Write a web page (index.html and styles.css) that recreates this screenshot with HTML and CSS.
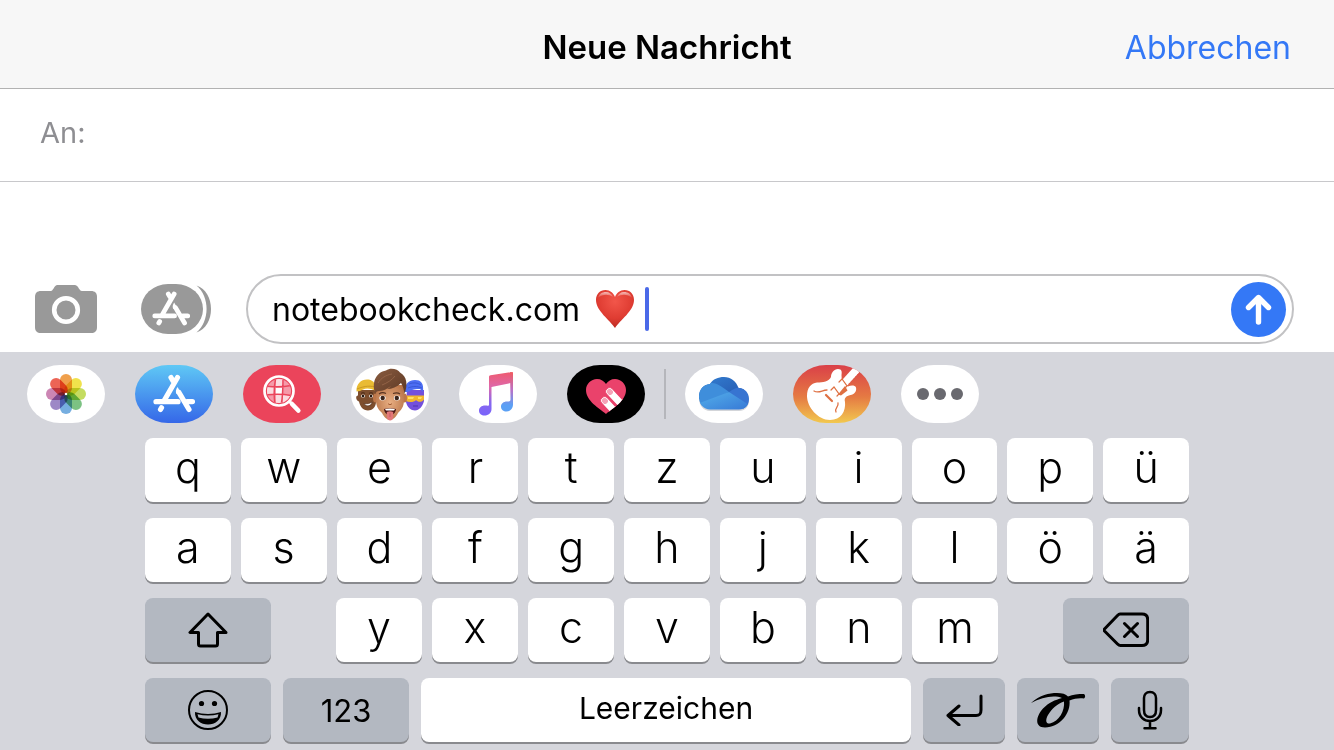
FILE: index.html
```html
<!DOCTYPE html>
<html lang="de">
<head>
  <meta charset="UTF-8">
  <meta name="viewport" content="width=device-width, initial-scale=1.0">
  <title>Neue Nachricht</title>
  <link rel="stylesheet" href="styles.css">
</head>
<body>
  <!-- Shared shapes -->
  <svg class="defs" aria-hidden="true">
    <symbol id="storeGlyph" viewBox="0 0 42 38">
      <g fill="none" stroke="currentColor" stroke-width="5.2" stroke-linecap="round" stroke-linejoin="round">
        <path d="M18 3l2 3.500M24.500 3L11.500 25.500M8.500 33.300l-1 1.700M3 27.200h22M34 27.200h5.500"/>
        <path d="M26 18L36 35"/>
      </g>
      <path fill="currentColor" d="M24.500 12.500c-2 3-2 5-1 7l4-2z"/>
    </symbol>
  </svg>

  <!-- Header -->
  <header class="navbar">
    <h1>Neue Nachricht</h1>
    <button class="cancel" type="button">Abbrechen</button>
  </header>

  <!-- Recipient -->
  <div class="recipient">
    <label for="to">An:</label>
    <input id="to" type="text">
  </div>

  <main class="messages"></main>

  <!-- Message Field -->
  <form class="composer">
    <button class="tool camera" type="button" aria-label="Kamera">
      <svg width="62" height="48" viewBox="0 0 62 48">
        <path fill="#999" d="M6 6h10c2 0 3-5 6-6h18c4 1 4 6 7 6h9c4 0 6 2 6 6v30c0 4-2 6-6 6H6c-4 0-6-2-6-6V12c0-4 2-6 6-6z"/>
        <circle cx="31" cy="25" r="11.8" fill="none" stroke="#fff" stroke-width="4.6"/>
      </svg>
    </button>
    <button class="tool apps" type="button" aria-label="Apps">
      <svg width="70" height="50" viewBox="0 0 70 50">
        <path fill="#999" d="M55.500 1.500C65 5 70 14 70 25s-5 20-14.500 23.500C69 37 69 13 55.500 1.500z"/>
        <rect width="62" height="50" rx="27" ry="25" fill="#999"/>
        <use href="#storeGlyph" x="11" y="7" width="38" height="35" color="#fff"/>
      </svg>
    </button>
    <div class="message-box">
      <input class="message" type="text" value="notebookcheck.com" aria-label="Nachricht">
      <svg class="heart" width="40" height="40" viewBox="0 0 40 40" role="img" aria-label="Herz">
        <defs>
          <radialGradient id="heartFill" cx=".5" cy=".3" r=".75">
            <stop offset="0" stop-color="#f2564a"/>
            <stop offset=".6" stop-color="#df3c32"/>
            <stop offset="1" stop-color="#b3271f"/>
          </radialGradient>
          <linearGradient id="heartShine" x2="0" y2="1">
            <stop offset="0" stop-color="#fff" stop-opacity=".65"/>
            <stop offset="1" stop-color="#fff" stop-opacity="0"/>
          </linearGradient>
        </defs>
        <path fill="url(#heartFill)" d="M20 39C15 31 1 22 1 11 1 5 5 1 10.500 1 15 1 18.500 4 20 8c1.500-4 5-7 9.500-7C35 1 39 5 39 11c0 11-14 20-19 28z"/>
        <path fill="url(#heartShine)" d="M3 9c1-4 4-6 8-6 3 0 6 2 7 5-5-3-10-3-15 1zM22 8c1-3 4-5 7-5 4 0 7 2 8 6-5-4-10-4-15-1z"/>
      </svg>
      <span class="caret"></span>
      <button class="send" type="submit" aria-label="Senden">
        <svg width="55" height="55" viewBox="0 0 55 55">
          <path d="M27.500 40V16M17.500 25.500l10-10 10 10" fill="none" stroke="#fff" stroke-width="5.400" stroke-linecap="round" stroke-linejoin="round"/>
        </svg>
      </button>
    </div>
  </form>

  <section class="keyboard">
    <!-- App Strip -->
    <nav class="app-strip">
      <button class="app" type="button" aria-label="Fotos">
        <svg viewBox="0 0 78 58">
          <g class="petals" transform="translate(39 29)">
            <rect x="-6" y="-20" width="12" height="20" rx="6" fill="#f0a04c"/>
            <rect x="-6" y="-20" width="12" height="20" rx="6" fill="#f0e24c" transform="rotate(45)"/>
            <rect x="-6" y="-20" width="12" height="20" rx="6" fill="#c4dc60" transform="rotate(90)"/>
            <rect x="-6" y="-20" width="12" height="20" rx="6" fill="#7cc283" transform="rotate(135)"/>
            <rect x="-6" y="-20" width="12" height="20" rx="6" fill="#76aee0" transform="rotate(180)"/>
            <rect x="-6" y="-20" width="12" height="20" rx="6" fill="#9d88c6" transform="rotate(225)"/>
            <rect x="-6" y="-20" width="12" height="20" rx="6" fill="#cc86b4" transform="rotate(270)"/>
            <rect x="-6" y="-20" width="12" height="20" rx="6" fill="#ec6455" transform="rotate(315)"/>
          </g>
          <circle cx="39" cy="29" r="1.300" fill="#fff"/>
        </svg>
      </button>
      <button class="app app-store" type="button" aria-label="App Store">
        <svg viewBox="0 0 78 58">
          <use href="#storeGlyph" x="18" y="9" width="42" height="39" color="#fff"/>
        </svg>
      </button>
      <button class="app app-images" type="button" aria-label="Bildersuche">
        <svg viewBox="0 0 78 58">
          <clipPath id="globeClip"><circle cx="36" cy="26" r="12"/></clipPath>
          <circle cx="36" cy="26" r="12" fill="#f59aa9"/>
          <g clip-path="url(#globeClip)">
            <path fill="#fbdbe0" d="M33 14h7v7h-7zM24 22h8v7h-8zM40 30h8v8h-8zM33 30h6v9h-6z"/>
            <path fill="#fff" d="M33 23h6v6h-6z"/>
            <path fill="none" stroke="#eb445b" stroke-width="1.500" d="M22 21c8 1 20 1 28-1M22 30c8-1 20-1 28 1M33 12c-2 8-2 20-1 28M40 12c0 8 0 20-2 28"/>
          </g>
          <circle cx="36" cy="26" r="14.500" fill="none" stroke="#fff" stroke-width="2.700"/>
          <path d="M46.500 36.500l3 3" stroke="#fff" stroke-width="3"/>
          <path d="M49 39l6.300 6.500" stroke="#fff" stroke-width="4.600" stroke-linecap="round"/>
        </svg>
      </button>
      <button class="app" type="button" aria-label="Memoji">
        <svg viewBox="0 0 78 58">
          <defs>
            <radialGradient id="skin" cx=".5" cy=".5" r=".6">
              <stop offset="0" stop-color="#e8ae82"/>
              <stop offset="1" stop-color="#b87448"/>
            </radialGradient>
            <linearGradient id="hair" x2="1" y2="1">
              <stop offset="0" stop-color="#8a5c40"/>
              <stop offset="1" stop-color="#5c3824"/>
            </linearGradient>
          </defs>
          <!-- left face -->
          <path fill="#7d4e2e" d="M7 25h18v12c0 5-4 8.500-8 8.500-5 0-8-4-9-9-3-1-4-6-1-6z"/>
          <path fill="#e9bb33" d="M5.500 26.500C5 19 10 14.500 16 14.500c4 0 7 2 8 5V26c-4-3-9-3-12-1.500-2 1-4 2-6.500 2z"/>
          <path fill="none" stroke="#c3921f" stroke-width=".8" d="M6 24c5-2 11-4 18-2"/>
          <ellipse cx="12" cy="31" rx="2" ry="1.500" fill="#fff"/><circle cx="12" cy="31" r="1.300" fill="#241812"/>
          <ellipse cx="20" cy="31" rx="2" ry="1.500" fill="#fff"/><circle cx="20" cy="31" r="1.300" fill="#241812"/>
          <path fill="none" stroke="#3b2113" stroke-width=".8" d="M10 28.500c1-1 3-1 4 0M18 28.500c1-1 3-1 4 0"/>
          <path fill="#fff" stroke="#4a2818" stroke-width=".6" d="M13 38.500c3 .8 6 0 8-1.500 0 4-6 5.500-8 1.500z"/>
          <!-- right face -->
          <path fill="#7350dc" d="M56 25h17v11c-1 5-5 9.500-9 9.500S56 42 55 37z"/>
          <path fill="#4c6df2" d="M54 27c-1-8 4-12 10-12 6 0 9 3 8 12l-3-3c-4 0-8 0-12 3z"/>
          <path fill="none" stroke="#3452ce" stroke-width=".8" d="M58 19c5-2 9-1 12 1M57 23c5-2 9-2 14 0"/>
          <path fill="#f2b62c" d="M55 30.500h18v4c-2 3-6 3-8 .5-2 2.500-7 2.500-10 1z"/>
          <path fill="#ffdf62" d="M57 32h6l-1 2h-5zM67 32h4l-1 2h-3z"/>
          <path stroke="#4b30a8" stroke-width=".9" d="M62 41h5"/>
          <!-- middle face -->
          <ellipse cx="24.500" cy="33" rx="2.500" ry="4.500" fill="#bd7649"/>
          <ellipse cx="53.500" cy="33" rx="2.500" ry="4.500" fill="#bd7649"/>
          <path fill="url(#skin)" d="M25 20h28v15c0 7-3 10-6 13-2 4-5 7-8 7s-6-3-8-7c-3-3-6-6-6-13z"/>
          <path fill="url(#hair)" d="M24.500 29C20 18 25 7 35 5.500c5-3.500 12-1 14 2 7 4 8 12 4.500 21.500-.5-4-1.500-8-3.500-11-4 4-9 6-14 6 2-1 3-2 4-3-4 3-8 5-12 5-2 0-3 1-4 3z"/>
          <path fill="none" stroke="#9a6a4d" stroke-width=".8" d="M27 18c3-5 8-8 14-9M31 20c5-2 10-5 13-9"/>
          <path fill="none" stroke="#573321" stroke-width="1.100" d="M28 29c2-1.500 5-1.500 7-.5M42 28.500c3-1 5-1 7 .5"/>
          <ellipse cx="31.500" cy="33" rx="3.200" ry="2.500" fill="#fff"/><circle cx="31.700" cy="33" r="2.200" fill="#3a241b"/>
          <ellipse cx="46" cy="33" rx="3.200" ry="2.500" fill="#fff"/><circle cx="45.800" cy="33" r="2.200" fill="#3a241b"/>
          <path fill="none" stroke="#a56038" d="M37 38.500c1 1.500 3 1.500 4 0"/>
          <path fill="#4b1716" d="M33 44c4-1 8-1 12 0-.5 4-3 6-6 6s-5.500-2-6-6z"/>
          <path fill="#fff" d="M34 44c3-.7 7-.7 10 0l-1 1.500h-8z"/>
          <path fill="#e37779" d="M35.800 47c2-1 4.400-1 6.400 0v5c0 4.500-6 4.500-6.400 0z"/>
          <path stroke="#bd5154" stroke-width=".7" d="M39 48v4"/>
        </svg>
      </button>
      <button class="app" type="button" aria-label="Musik">
        <svg viewBox="0 0 78 58">
          <defs>
            <linearGradient id="note" x1=".5" x2=".5" y2="1">
              <stop offset="0" stop-color="#ef5b70"/>
              <stop offset=".35" stop-color="#dd68ad"/>
              <stop offset=".7" stop-color="#8868ee"/>
              <stop offset="1" stop-color="#7963fb"/>
            </linearGradient>
            <linearGradient id="noteRight" gradientUnits="userSpaceOnUse" x1="0" y1="8" x2="0" y2="46">
              <stop offset="0" stop-color="#ef5b63"/>
              <stop offset=".45" stop-color="#ba72c8"/>
              <stop offset=".85" stop-color="#5ba0f5"/>
            </linearGradient>
          </defs>
          <path fill="url(#note)" d="M30 12c0-1 .5-1.500 1.500-1.700L52 7.200V18l-19.500 4v22c0 4-3 6.500-7 6.500-3 0-5.500-2-5.500-4.800 0-3 2.500-5.200 6-5.200 1.500 0 3 .3 4 0z"/>
          <path fill="url(#noteRight)" d="M51 7.300l2-.3c.7 0 1 .3 1 1v31.500c0 4-3 7-6.500 7-3 0-5.500-2-5.500-4.800 0-3 2.500-5.200 6-5.200 2 0 3.500 0 3.500-2z"/>
        </svg>
      </button>
      <button class="app app-touch" type="button" aria-label="Digital Touch">
        <svg viewBox="0 0 78 58">
          <clipPath id="touchClip"><path id="touchHeart" d="M39 49C32 43 19 36 19 25c0-6 5-11 11-11 4 0 7 2 9 5 2-3 5-5 9-5 6 0 11 5 11 11 0 11-13 18-20 24z"/></clipPath>
          <use href="#touchHeart" fill="#ea426b"/>
          <g clip-path="url(#touchClip)" stroke="#ea426b" stroke-width="1">
            <g transform="translate(43 27) rotate(-43)">
              <rect x="-4" y="-4.500" width="8" height="36" rx="4" fill="#fff"/>
              <path fill="#f5a2b7" stroke="none" d="M-2.700-1c0-3 5.400-3 5.400 0v2.500c-1 2-4.400 2-5.400 0z"/>
            </g>
            <g transform="translate(38 36) rotate(-43)">
              <rect x="-4" y="-4.500" width="8" height="36" rx="4" fill="#fff"/>
              <path fill="#f5a2b7" stroke="none" d="M-2.700-1c0-3 5.400-3 5.400 0v2.500c-1 2-4.400 2-5.400 0z"/>
            </g>
          </g>
        </svg>
      </button>
      <span class="divider"></span>
      <button class="app" type="button" aria-label="OneDrive">
        <svg viewBox="0 0 78 58">
          <defs>
            <linearGradient id="cloudTop" x2="1" y2="1"><stop offset="0" stop-color="#3482d4"/><stop offset="1" stop-color="#2556ad"/></linearGradient>
            <linearGradient id="cloudLow" x2="1" y2="1"><stop offset="0" stop-color="#55b2eb"/><stop offset="1" stop-color="#3576d5"/></linearGradient>
            <clipPath id="cloudClip">
              <path id="cloud" d="M25 19c3-5 8-7 14-7 7 0 12 4 14.500 11C60 23 64 28 64 34c0 6-4 10.500-10 10.500H25c-6 0-11-5-11-12.500 0-7 4-12.500 11-13z"/>
            </clipPath>
          </defs>
          <use href="#cloud" y="1.500" fill="#d3d5d9"/>
          <g clip-path="url(#cloudClip)">
            <path fill="url(#cloudTop)" d="M14 10h45v24H14z"/>
            <path fill="#3f8edb" d="M12 18h15c5 0 12 5 17 9l-28 15h-4z"/>
            <path fill="#3774d1" d="M44 27c4-3 8-5 13-5h8v24h-5z"/>
            <path fill="url(#cloudLow)" d="M12 39l32-12 20 13v6H12z"/>
          </g>
        </svg>
      </button>
      <button class="app app-garage" type="button" aria-label="GarageBand">
        <svg viewBox="0 0 78 58">
          <path stroke="#fff" stroke-width="7.500" d="M46 24L66 2"/>
          <path fill="#fff" d="M38 12c0-4 3-8 7-8s4 3 3.500 6c0 4 .5 7 3.500 9l3 2.500c3-1.500 7-1.500 8 1 1 4-2 7-5.500 7.500C53 31 51 33 52 37c1 9-4 18-15 18-12 0-23-13-23-24 0-8 4-13 10-13.500 6 0 12-1 14-5.500z"/>
          <path d="M52 23L68 6" stroke="#dc5344" stroke-width="1" stroke-dasharray="1 2"/>
          <path fill="#df7042" d="M52 21l2.500 4.500-6.500 5-3-1z"/>
          <g fill="none" stroke="#df7042" stroke-linecap="round">
            <path stroke-width="1.300" d="M21 26c5 3 8-1 13-1M43 47c-2-4 3-5 2-9"/>
            <path stroke-width="1.200" d="M38 25l3-3 5 7-2 2M46 17l3-3 5 7-2 2"/>
            <path stroke-width="2.200" d="M33 30l6 6"/>
          </g>
        </svg>
      </button>
      <button class="app" type="button" aria-label="Mehr">
        <svg viewBox="0 0 78 58" fill="#69696f">
          <circle cx="22" cy="29" r="6"/><circle cx="39" cy="29" r="6"/><circle cx="56" cy="29" r="6"/>
        </svg>
      </button>
    </nav>

    <!-- Keys -->
    <div class="keys">
      <div class="row">
        <button class="key">q</button>
        <button class="key">w</button>
        <button class="key">e</button>
        <button class="key">r</button>
        <button class="key">t</button>
        <button class="key">z</button>
        <button class="key">u</button>
        <button class="key">i</button>
        <button class="key">o</button>
        <button class="key">p</button>
        <button class="key">ü</button>
      </div>
      <div class="row">
        <button class="key">a</button>
        <button class="key">s</button>
        <button class="key">d</button>
        <button class="key">f</button>
        <button class="key">g</button>
        <button class="key">h</button>
        <button class="key">j</button>
        <button class="key">k</button>
        <button class="key">l</button>
        <button class="key">ö</button>
        <button class="key">ä</button>
      </div>
      <div class="row row-shift">
        <button class="key dark" aria-label="Umschalt">
          <svg width="40" height="36" viewBox="0 0 40 36"><path d="M20 2L2 20.500h8.500V32c0 1.500.5 2 2 2h15c1.500 0 2-.5 2-2V20.500H38z"/></svg>
        </button>
        <div class="letters">
          <button class="key">y</button>
          <button class="key">x</button>
          <button class="key">c</button>
          <button class="key">v</button>
          <button class="key">b</button>
          <button class="key">n</button>
          <button class="key">m</button>
        </div>
        <button class="key dark" aria-label="Löschen">
          <svg width="46" height="36" viewBox="0 0 46 36"><path d="M17 2h22c4 0 5.700 1.700 5.700 5.700v20c0 4-1.700 5.800-5.700 5.800H17.500c-1.500 0-2-.5-3-1.500L1.500 19c-.7-.8-.7-1.200 0-2l13-13.500C15.500 2.500 16 2 17 2zM21.500 11.500l13 13M34.500 11.500l-13 13"/></svg>
        </button>
      </div>
      <div class="row row-space">
        <button class="key dark" aria-label="Emoji">
          <svg class="smiley" width="42" height="42" viewBox="0 0 42 42">
            <circle cx="21" cy="21" r="19"/>
            <circle cx="14.500" cy="14.500" r="2.600" fill="#000" stroke="none"/>
            <circle cx="27.500" cy="14.500" r="2.600" fill="#000" stroke="none"/>
            <path fill="#000" stroke="none" d="M8 23c8 2.600 18 2.600 26 0 .5 8-6 12.500-13 12.500S7.500 31 8 23z"/>
            <path fill="#b3b8c1" stroke="none" d="M10.500 25.300c7 1.700 14 1.700 21 0l-1 3.200c-6 1.700-13 1.700-19 0z"/>
          </svg>
        </button>
        <button class="key dark small">123</button>
        <button class="key space small">Leerzeichen</button>
        <button class="key dark" aria-label="Return">
          <svg width="38" height="32" viewBox="0 0 38 32"><path d="M36 2v14c0 4-1 5.500-5 5.500H3M14 12L3 21.500 14 31"/></svg>
        </button>
        <button class="key dark" aria-label="Handschrift">
          <svg width="56" height="36" viewBox="0 0 56 36">
            <path fill="#000" stroke="none" d="M1 11C10 3 19 1 27 1c5 0 9 1 11 3.500C43 2.500 48 2 54 2c1.500 1 1.500 3.500 0 4.500-5-.5-9.500 0-14.500 2C41 21 30 35.500 15 35.500 4 35.500 6 24 13 16.500c6-6 12-8.500 19-10.500C24 3 12 5 1 11zm33-1.500c-7 2.500-12 7-16 13.500-3 5.500-2 9 2 8.500 9-2 15-13 14-22z"/>
          </svg>
        </button>
        <button class="key dark" aria-label="Diktat">
          <svg class="mic" width="26" height="40" viewBox="0 0 26 40"><path d="M13 2c4 0 6 3 6 6v12c0 4-2 7-6 7s-6-3-6-7V8c0-3 2-6 6-6zM2 18v2c0 7 5 11 11 11s11-4 11-11v-2M13 31v7M7.500 38.300h11"/></svg>
        </button>
      </div>
    </div>
  </section>
</body>
</html>
```

FILE: styles.css
```css
/* Global Styles */
* {
  box-sizing: border-box;
}
body {
  font-family: Inter, Roboto, Arial, sans-serif;
  background: #ffffff;
  color: #000000;
  margin: 0;
  display: flex;
  flex-direction: column;
  min-height: 100vh;
}
button, input {
  font-family: inherit;
  color: inherit;
  border: none;
  background: none;
  padding: 0;
  margin: 0;
  outline: none;
}
button {
  cursor: pointer;
}
svg {
  display: block;
}
.defs {
  position: absolute;
  width: 0;
  height: 0;
}

/* Header */
.navbar {
  display: grid;
  grid-template-columns: 1fr auto 1fr;
  align-items: center;
  height: 89px;
  padding: 6px 43px 0;
  background: #f7f7f7;
  border-bottom: 1px solid #b2b2b2;
}
.navbar h1 {
  grid-column: 2;
  margin: 0;
  font-size: 33px;
  font-weight: 600;
}
.cancel {
  justify-self: end;
  font-size: 32px;
  color: #3478f6;
}

/* Recipient */
.recipient {
  display: flex;
  align-items: center;
  gap: 12px;
  height: 93px;
  padding: 0 40px 6px;
  border-bottom: 1px solid #c8c8cb;
  font-size: 29px;
}
.recipient label {
  color: #8e8e92;
}
.recipient input {
  flex: 1;
  font-size: 29px;
}
.messages {
  flex: 1;
}

/* Message Field */
.composer {
  display: flex;
  align-items: center;
  padding: 0 40px 8px 35px;
}
.apps {
  margin: 0 35px 0 44px;
}
.message-box {
  flex: 1;
  display: flex;
  align-items: center;
  height: 70px;
  padding: 0 6px 0 24px;
  border: 2px solid #c2c2c4;
  border-radius: 35px;
}
.message {
  width: 323px;
  font-size: 32px;
}
.caret {
  width: 4px;
  height: 44px;
  margin-left: 10px;
  border-radius: 2px;
  background: #4a69e8;
}
.send {
  margin-left: auto;
  border-radius: 50%;
  background: #3478f6;
}

/* Keyboard */
.keyboard {
  padding: 13px 27px 8px;
  background: #d5d6dc;
}
.app-strip {
  display: flex;
  align-items: center;
  gap: 30px;
}
.app {
  flex: none;
  width: 78px;
  height: 58px;
  border-radius: 33px / 29px;
  background: #ffffff;
  overflow: hidden;
}
.petals {
  isolation: isolate;
}
.petals rect {
  mix-blend-mode: multiply;
}
.app-store {
  background: linear-gradient(#5fc8f5, #3567e8);
}
.app-images {
  background: #eb445b;
}
.app-touch {
  background: #000000;
}
.app-garage {
  background: linear-gradient(#da4048, #e57a43 55%, #f2c84f);
}
.divider {
  width: 2px;
  height: 50px;
  margin: 0 -11px;
  background: #b5b6bb;
}

/* Keys */
.keys {
  display: flex;
  flex-direction: column;
  gap: 16px;
  max-width: 1044px;
  margin: 15px auto 0;
}
.row {
  display: grid;
  grid-template-columns: repeat(11, 1fr);
  gap: 10px;
}
.row-shift {
  grid-template-columns: 126fr 662fr 126fr;
  gap: 65px;
}
.letters {
  display: grid;
  grid-template-columns: repeat(7, 1fr);
  gap: 10px;
}
.row-space {
  grid-template-columns: 126fr 126fr 490fr 82fr 82fr 78fr;
  gap: 12px;
}
.key {
  display: flex;
  justify-content: center;
  align-items: center;
  height: 64px;
  padding-bottom: 6px;
  border-radius: 8px;
  background: #ffffff;
  box-shadow: 0 2px 0 #898a8e;
  font-size: 43px;
  font-weight: 350;
  line-height: 1;
}
.dark {
  padding: 0;
  background: #b3b8c1;
}
.small {
  font-size: 31px;
  font-weight: 400;
}
.space {
  padding-bottom: 4px;
  font-size: 30px;
}
.key svg {
  fill: none;
  stroke: #000000;
  stroke-width: 3;
  stroke-linecap: round;
  stroke-linejoin: round;
}
.key .smiley {
  stroke-width: 2;
}
.key .mic {
  stroke-width: 2.5;
}
```
